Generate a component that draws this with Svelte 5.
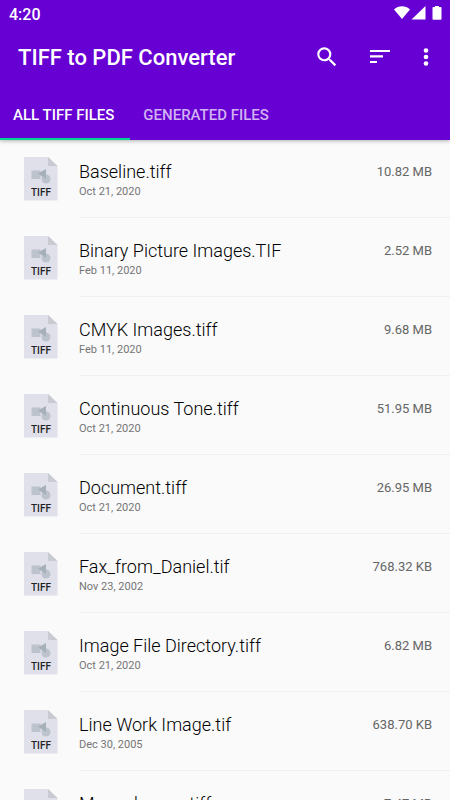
<script lang="ts">
  type TiffFile = { name: string; date: string; size: string };

  const tabs: string[] = ['All TIFF files', 'Generated files'];

  const files: TiffFile[] = [
    { name: 'Baseline.tiff', date: 'Oct 21, 2020', size: '10.82 MB' },
    { name: 'Binary Picture Images.TIF', date: 'Feb 11, 2020', size: '2.52 MB' },
    { name: 'CMYK Images.tiff', date: 'Feb 11, 2020', size: '9.68 MB' },
    { name: 'Continuous Tone.tiff', date: 'Oct 21, 2020', size: '51.95 MB' },
    { name: 'Document.tiff', date: 'Oct 21, 2020', size: '26.95 MB' },
    { name: 'Fax_from_Daniel.tif', date: 'Nov 23, 2002', size: '768.32 KB' },
    { name: 'Image File Directory.tiff', date: 'Oct 21, 2020', size: '6.82 MB' },
    { name: 'Line Work Image.tif', date: 'Dec 30, 2005', size: '638.70 KB' },
    { name: 'Monochrome.tiff', date: 'Oct 21, 2020', size: '7.47 MB' },
  ];

  let active = $state(0);
</script>

<div class="screen">
  <header>
    <div class="status">
      <span>4:20</span>
      <svg width="48" height="16" viewBox="0 0 48 16" fill="#fff" aria-hidden="true">
        <path d="M0 3.500C4.500-.800 11.500-.800 16 3.500L8 13z" />
        <path d="M31.500 0V13.500H17.500z" />
        <path d="M41 0h4v1h1.500c.700 0 1 .300 1 1v10.700c0 .700-.300 1-1 1h-7c-.700 0-1-.300-1-1V2c0-.700.300-1 1-1H41z" />
      </svg>
    </div>

    <div class="toolbar">
      <h1>TIFF to PDF Converter</h1>
      <button class="icon" aria-label="Search">
        <svg width="26" height="26" viewBox="0 0 24 24">
          <path d="M15.500 14h-.790l-.280-.270A6.471 6.471 0 0 0 16 9.500 6.500 6.500 0 1 0 9.500 16c1.610 0 3.090-.590 4.230-1.570l.270.280v.790l5 4.990L20.490 19l-4.990-5zm-6 0C7.010 14 5 11.990 5 9.500S7.010 5 9.500 5 14 7.010 14 9.500 11.990 14 9.500 14z" />
        </svg>
      </button>
      <button class="icon" aria-label="Sort">
        <svg width="26" height="26" viewBox="0 0 26 26">
          <path d="M3 6h20v2H3zM3 11.300h13v2.300H3zM3 17h7v2H3z" />
        </svg>
      </button>
      <button class="icon more" aria-label="More options">
        <svg width="26" height="26" viewBox="0 0 26 26">
          <circle cx="13" cy="6.500" r="2.300" />
          <circle cx="13" cy="13" r="2.300" />
          <circle cx="13" cy="19.500" r="2.300" />
        </svg>
      </button>
    </div>

    <div class="tabs" role="tablist">
      {#each tabs as tab, i}
        <button role="tab" aria-selected={active === i} class:active={active === i} onclick={() => (active = i)}>
          {tab}
        </button>
      {/each}
    </div>
  </header>

  <ul>
    {#each files as file}
      <li>
        <svg class="file-icon" width="34" height="44" viewBox="0 0 34 44" aria-hidden="true">
          <path d="M0 0h24l9.500 9v34.500H0z" fill="#e0e0eb" />
          <path d="M24 0l9.500 9H24z" fill="#c9cbd2" />
          <path d="M7.500 13.500h9v8.500h-9z" fill="#bcc3cc" />
          <circle cx="22" cy="22" r="4.500" fill="#bcc3cc" />
          <path d="M14 16.500l8-4.500v10z" fill="#a5b0b8" />
          <text x="17" y="39" text-anchor="middle">TIFF</text>
        </svg>
        <div class="row">
          <div class="info">
            <span class="name">{file.name}</span>
            <span class="date">{file.date}</span>
          </div>
          <span class="size">{file.size}</span>
        </div>
      </li>
    {/each}
  </ul>
</div>

<style>
  :global(body) {
    margin: 0;
    background: #fafafa;
  }

  .screen {
    display: flex;
    flex-direction: column;
    height: 100vh;
    overflow: hidden;
    font-family: Roboto, sans-serif;
    color: #000;
  }

  header {
    flex: none;
    color: #fff;
    background: #6700d3;
    box-shadow: 0 1px 4px rgba(0, 0, 0, 0.3);
    z-index: 1;
  }

  .status {
    display: flex;
    align-items: center;
    justify-content: space-between;
    height: 28px;
    padding: 0 8px 0 9px;
    font-size: 16px;
    font-weight: 500;
  }

  .toolbar {
    display: flex;
    align-items: center;
    height: 58px;
    padding: 0 11px 0 18px;
  }

  h1 {
    flex: 1;
    margin: 0;
    padding-top: 2px;
    font-size: 22px;
    font-weight: 500;
    line-height: 28px;
  }

  button {
    padding: 0;
    border: 0;
    font: inherit;
    color: inherit;
    background: none;
    cursor: pointer;
  }

  .icon {
    display: flex;
    margin-left: 27px;
  }

  .icon.more {
    margin-left: 20px;
  }

  .icon svg {
    fill: #fff;
  }

  .tabs {
    display: flex;
    height: 54px;
  }

  .tabs button {
    padding: 5px 16px 0 13px;
    border-bottom: 2px solid transparent;
    font-size: 15px;
    font-weight: 500;
    text-transform: uppercase;
    color: #d1b2f2;
  }

  .tabs button.active {
    border-color: #00d68f;
    color: #fff;
  }

  ul {
    flex: 1;
    margin: -1px 0 0;
    padding: 0;
    overflow-y: auto;
    scrollbar-width: none;
    list-style: none;
  }

  li {
    display: flex;
    align-items: center;
    gap: 21px;
    padding-left: 24px;
  }

  .file-icon text {
    font-size: 10px;
    font-weight: 500;
    fill: #222;
  }

  .row {
    display: flex;
    flex: 1;
    align-items: flex-start;
    justify-content: space-between;
    height: 56px;
    padding: 22px 18px 0 0;
    border-bottom: 1px solid #f0f0f0;
  }

  .info {
    display: flex;
    flex-direction: column;
  }

  .name {
    font-size: 18px;
    font-weight: 300;
    line-height: 22px;
  }

  .date {
    font-size: 11px;
    line-height: 17px;
    color: #757575;
  }

  .size {
    font-size: 13px;
    line-height: 22px;
    color: #666;
  }
</style>
